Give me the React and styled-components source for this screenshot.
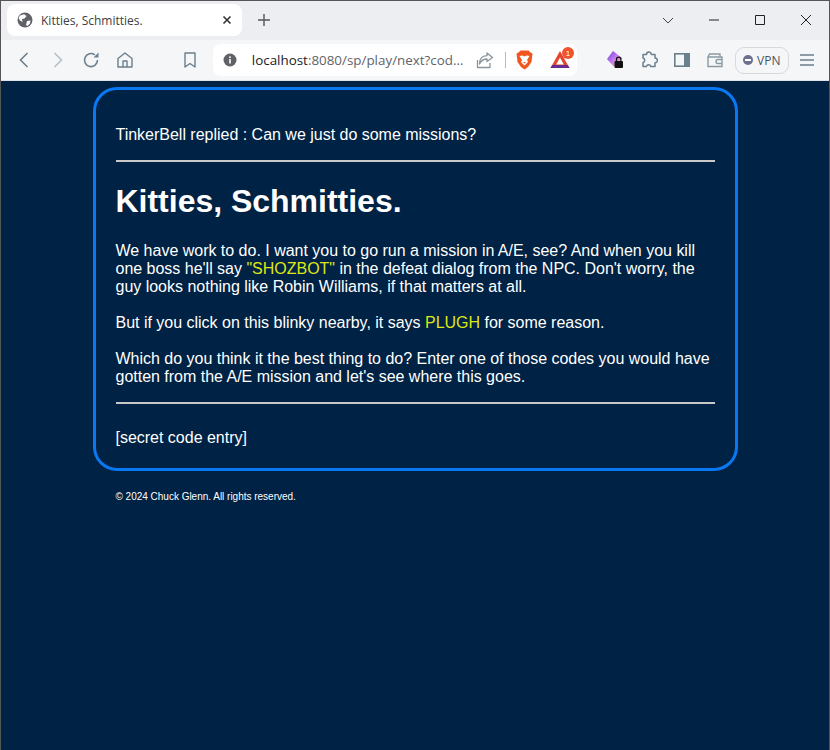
import styled, { createGlobalStyle } from 'styled-components';

const GlobalStyle = createGlobalStyle`
    html, body {
        margin : 0;
        padding : 0;
        height : 100%;
        background : #002244;
    }
    #root {
        height : 100%;
    }
`;

const ICON = '#5f6368';
const TOOL = '#6b7f8c';

function Back() {
    return <svg width="16" height="18" viewBox="0 0 16 18" fill="none" stroke={TOOL} strokeWidth="1.6"><path d="M11.5 2 L4.5 9 L11.5 16" /></svg>;
}

function Forward() {
    return <svg width="16" height="18" viewBox="0 0 16 18" fill="none" stroke="#b4c0c8" strokeWidth="1.6"><path d="M4.5 2 L11.5 9 L4.5 16" /></svg>;
}

function Reload() {
    return <svg width="18" height="18" viewBox="0 0 18 18" fill="none" stroke={TOOL} strokeWidth="1.6">
        <path d="M15.5 9 A6.5 6.5 0 1 1 12.8 3.8" />
        <path d="M11.5 6.5 H16.5 V1.5 Z" fill={TOOL} stroke="none" />
    </svg>;
}

function Home() {
    return <svg width="18" height="18" viewBox="0 0 18 18" fill="none" stroke={TOOL} strokeWidth="1.4" strokeLinejoin="round">
        <path d="M2 7.5 L9 2 L16 7.5 V16 H2 Z" />
        <path d="M7 16 V10 H11 V16" />
    </svg>;
}

function Bookmark() {
    return <svg width="14" height="18" viewBox="0 0 14 18" fill="none" stroke={TOOL} strokeWidth="1.4" strokeLinejoin="round"><path d="M2 2 H12 V16 L7 12.5 L2 16 Z" /></svg>;
}

function Globe() {
    return <svg width="16" height="16" viewBox="0 0 16 16">
        <circle cx="8" cy="8" r="7.5" fill={ICON} />
        <path d="M3 3.5 L7 2.2 L9.5 4 L7.5 6.5 L5 7 L5.5 10 L3 8.5 L1.5 6 Z M10 9 L13.5 8.5 L13 11.5 L10.5 14 L9 13 Z" fill="#fff" />
    </svg>;
}

function Info() {
    return <svg width="14" height="14" viewBox="0 0 14 14">
        <circle cx="7" cy="7" r="6.5" fill={ICON} />
        <rect x="6.2" y="6" width="1.6" height="4.5" fill="#fff" />
        <rect x="6.2" y="3.4" width="1.6" height="1.6" fill="#fff" />
    </svg>;
}

function Share() {
    return <svg width="18" height="18" viewBox="0 0 18 18" fill="none" stroke="#8a949c" strokeWidth="1.3" strokeLinejoin="round">
        <path d="M11 2 L16.5 6.5 L11 10.5 V8 C7 8 5 10 3.5 13 C3.5 8 6 4.8 11 4.6 Z" />
        <path d="M1.5 9 V16.5 H14 V12" />
    </svg>;
}

function BraveLion() {
    return <svg width="17" height="20" viewBox="0 0 17 20">
        <path d="M4.5 0.5 H12.5 L14.5 2.5 L16.5 3.5 L15.5 12 L12 17 L8.5 19.5 L5 17 L1.5 12 L0.5 3.5 L2.5 2.5 Z" fill="#f1561f" />
        <path d="M3.5 6 L6.5 5.5 L8.5 6.5 L10.5 5.5 L13.5 6 L11 10 L12 12 L8.5 15.5 L5 12 L6 10 Z" fill="#fff" />
        <path d="M7 12 H10 L8.5 13.5 Z" fill="#f1561f" />
    </svg>;
}

function Rewards() {
    return <svg width="26" height="24" viewBox="0 0 26 24">
        <path d="M10 4 L19.5 21 H0.5 Z" fill="#e3452f" />
        <path d="M0.5 21 H19.5 L17.8 18 H2.2 Z" fill="#662d91" />
        <path d="M10 10.5 L13.8 17.5 H6.2 Z" fill="#fff" />
        <circle cx="18" cy="6" r="6" fill="#f0532d" />
        <text x="18" y="9" fontSize="8" fill="#fff" textAnchor="middle" fontFamily="Liberation Sans, sans-serif">1</text>
    </svg>;
}

function LockExt() {
    return <svg width="18" height="20" viewBox="0 0 18 20">
        <defs>
            <linearGradient id="gem" x1="0" y1="0" x2="1" y2="1">
                <stop offset="0" stopColor="#6d3ce0" />
                <stop offset="0.5" stopColor="#c77df0" />
                <stop offset="1" stopColor="#ffc27a" />
            </linearGradient>
        </defs>
        <path d="M6 1 L15 8 L7 17 L0 9 Z" fill="url(#gem)" />
        <rect x="7.5" y="11" width="8.5" height="7" rx="1" fill="#111" />
        <path d="M9.5 11 V9.4 A2.2 2.2 0 0 1 13.9 9.4 V11" fill="none" stroke="#111" strokeWidth="1.3" />
    </svg>;
}

function Puzzle() {
    return <svg width="18" height="18" viewBox="0 0 18 18" fill="none" stroke={TOOL} strokeWidth="1.5" strokeLinejoin="round">
        <path d="M6.5 3.5 A2.4 2.4 0 0 1 11.3 3.5 H15 V7 A2.4 2.4 0 0 1 15 11.8 V15.5 H10.8 A2.3 2.3 0 0 0 6.4 15.5 H3 V11.6 A2.4 2.4 0 0 0 3 7 V3.5 Z" />
    </svg>;
}

function Sidebar() {
    return <svg width="16" height="14" viewBox="0 0 16 14">
        <rect x="0.8" y="0.8" width="14.4" height="12.4" fill="none" stroke={TOOL} strokeWidth="1.6" />
        <rect x="10" y="1" width="5" height="12" fill={TOOL} />
    </svg>;
}

function Wallet() {
    return <svg width="16" height="15" viewBox="0 0 16 15" fill="none" stroke="#8a9aa5" strokeWidth="1.4">
        <path d="M1 4 V13.5 H15 V4 Z M1 4 L2.5 1 H13 V4" />
        <path d="M15 6.5 H11 A2 2 0 0 0 11 10.5 H15" />
    </svg>;
}

function Burger() {
    return <svg width="14" height="12" viewBox="0 0 14 12" stroke={TOOL} strokeWidth="1.3"><path d="M0 1 H14 M0 6 H14 M0 11 H14" /></svg>;
}

function Caption({ d, width = 12, color = '#222', sw = 1 }) {
    return <svg width={width} height="12" viewBox="0 0 12 12" fill="none" stroke={color} strokeWidth={sw}><path d={d} /></svg>;
}

function App() {
    return (
        <Window>
            <GlobalStyle />
            <TabStrip>
                <Tab>
                    <Globe />
                    <TabTitle>Kitties, Schmitties.</TabTitle>
                    <TabClose>
                        <Caption d="M2.5 2.5 L9.5 9.5 M9.5 2.5 L2.5 9.5" sw={1.6} color="#333" />
                    </TabClose>
                </Tab>
                <NewTab>
                    <Caption d="M6 0 V12 M0 6 H12" sw={1.4} color="#555" />
                </NewTab>
                <Captions>
                    <CaptionButton><Caption d="M1 4 L6 9 L11 4" color="#444" /></CaptionButton>
                    <CaptionButton><Caption d="M1 6 H11" /></CaptionButton>
                    <CaptionButton><Caption d="M1.5 1.5 H10.5 V10.5 H1.5 Z" /></CaptionButton>
                    <CaptionButton><Caption d="M1 1 L11 11 M11 1 L1 11" /></CaptionButton>
                </Captions>
            </TabStrip>

            <Toolbar>
                <NavGroup>
                    <NavButton><Back /></NavButton>
                    <NavButton><Forward /></NavButton>
                    <NavButton><Reload /></NavButton>
                    <NavButton><Home /></NavButton>
                </NavGroup>
                <BookmarkSlot><Bookmark /></BookmarkSlot>
                <Omnibox>
                    <Info />
                    <Url>localhost<UrlDim>:8080/sp/play/next?cod...</UrlDim></Url>
                    <Share />
                    <OmniDivider />
                    <BraveLion />
                    <RewardsSlot><Rewards /></RewardsSlot>
                </Omnibox>
                <Extensions>
                    <ExtSlot><LockExt /></ExtSlot>
                    <ExtSlot><Puzzle /></ExtSlot>
                    <ExtSlot><Sidebar /></ExtSlot>
                    <ExtSlot><Wallet /></ExtSlot>
                    <VpnButton><VpnDot /><span>VPN</span></VpnButton>
                    <BurgerSlot><Burger /></BurgerSlot>
                </Extensions>
            </Toolbar>

            <Page>
                <Card>
                    <Reply>TinkerBell replied : Can we just do some missions?</Reply>
                    <Rule />
                    <Title>Kitties, Schmitties.</Title>
                    <Para>
                        We have work to do. I want you to go run a mission in A/E, see? And when you kill one boss he'll say <Code>"SHOZBOT"</Code> in the defeat dialog from the NPC. Don't worry, the guy looks nothing like Robin Williams, if that matters at all.
                    </Para>
                    <Para>
                        But if you click on this blinky nearby, it says <Code>PLUGH</Code> for some reason.
                    </Para>
                    <LastPara>
                        Which do you think it the best thing to do? Enter one of those codes you would have gotten from the A/E mission and let's see where this goes.
                    </LastPara>
                    <Rule />
                    <Entry>[secret code entry]</Entry>
                </Card>
                <Footer>© 2024 Chuck Glenn. All rights reserved.</Footer>
            </Page>
        </Window>
    );
}

export default App;

const Window = styled.div`
    width : 830px;
    height : 750px;
    box-sizing : border-box;
    display : flex;
    flex-direction : column;
    overflow : hidden;
    border : 1px solid #555;
    border-bottom : none;
    font-family : "Liberation Sans", Arial, sans-serif;
`;

const TabStrip = styled.div`
    height : 39px;
    flex : none;
    display : flex;
    align-items : flex-end;
    background : #eceef1;
    padding-left : 6px;
`;

const Tab = styled.div`
    width : 235px;
    height : 32px;
    margin-bottom : 4px;
    box-sizing : border-box;
    background : #fff;
    border-radius : 8px;
    display : flex;
    align-items : center;
    padding : 0 10px;
`;

const TabTitle = styled.span`
    font-family : "Open Sans", sans-serif;
    font-size : 12px;
    color : #3c4043;
    margin-left : 8px;
    flex : 1;
`;

const TabClose = styled.span`
    display : flex;
    margin-right : -1px;
`;

const NewTab = styled.div`
    margin-left : 16px;
    height : 39px;
    padding-bottom : 2px;
    box-sizing : border-box;
    display : flex;
    align-items : center;
`;

const Captions = styled.div`
    margin-left : auto;
    align-self : stretch;
    padding-bottom : 2px;
    display : flex;
    align-items : center;
`;

const CaptionButton = styled.div`
    width : 46px;
    display : flex;
    justify-content : center;
`;

const Toolbar = styled.div`
    height : 41px;
    flex : none;
    box-sizing : border-box;
    display : flex;
    align-items : center;
    background : #f5f6f8;
    border-bottom : 1px solid #dfe1e5;
    padding-left : 14px;
`;

const NavGroup = styled.div`
    display : flex;
    align-items : center;
    gap : 15.6px;
`;

const NavButton = styled.div`
    width : 18px;
    display : flex;
    justify-content : center;
`;

const BookmarkSlot = styled.div`
    display : flex;
    margin-left : 49px;
`;

const Omnibox = styled.div`
    margin-left : 16px;
    width : 364px;
    height : 32px;
    box-sizing : border-box;
    background : #fff;
    border-radius : 8px;
    display : flex;
    align-items : center;
    padding-left : 10px;
`;

const Url = styled.span`
    font-family : "Open Sans", sans-serif;
    font-size : 13.4px;
    color : #202124;
    margin-left : 15px;
    width : 224px;
    white-space : nowrap;
`;

const UrlDim = styled.span`
    color : #5f6368;
`;

const OmniDivider = styled.span`
    width : 1px;
    height : 16px;
    background : #b8bcc0;
    margin : 0 10px 0 11px;
`;

const RewardsSlot = styled.span`
    display : flex;
    margin-left : 17px;
    margin-top : -2px;
`;

const Extensions = styled.div`
    display : flex;
    align-items : center;
    margin-left : 23px;
`;

const ExtSlot = styled.div`
    width : 33px;
    display : flex;
    justify-content : center;
`;

const BurgerSlot = styled.div`
    display : flex;
    margin-left : 11px;
`;

const VpnButton = styled.div`
    height : 27px;
    width : 54px;
    box-sizing : border-box;
    border : 1px solid #d5dadf;
    border-radius : 9px;
    display : flex;
    align-items : center;
    justify-content : center;
    gap : 4px;
    margin-left : 3px;
    font-family : "Open Sans", sans-serif;
    font-size : 12px;
    color : #4c5560;
`;

const VpnDot = styled.span`
    width : 10px;
    height : 10px;
    border-radius : 50%;
    background : #6b7090;
    position : relative;
    &::after {
        content : '';
        position : absolute;
        left : 2px;
        right : 2px;
        top : 4px;
        height : 2px;
        background : #fff;
    }
`;

const Page = styled.div`
    flex : 1;
    background : #002244;
    color : #fff;
    font-size : 16px;
    line-height : 18px;
    letter-spacing : -0.012px;
    padding-top : 6px;
`;

const Card = styled.div`
    width : 599.5px;
    margin-left : 91.5px;
    padding : 20px;
    box-sizing : content-box;
    border : 3px solid #0a78f0;
    border-radius : 24px;
`;

const Reply = styled.div`
    margin-top : 16px;
    margin-bottom : 16px;
`;

const Rule = styled.div`
    height : 2px;
    background : #c8c8c8;
`;

const Title = styled.h1`
    font-size : 32px;
    line-height : 37px;
    font-weight : bold;
    margin : 21px 0 22px;
`;

const Para = styled.p`
    margin : 0 0 18px;
`;

const LastPara = styled(Para)`
    margin-bottom : 16px;
`;

const Code = styled.span`
    color : #dfe615;
`;

const Entry = styled.div`
    margin-top : 25px;
    margin-bottom : 1px;
`;

const Footer = styled.div`
    font-size : 10px;
    line-height : 11px;
    margin : 20px 0 0 114.5px;
`;
